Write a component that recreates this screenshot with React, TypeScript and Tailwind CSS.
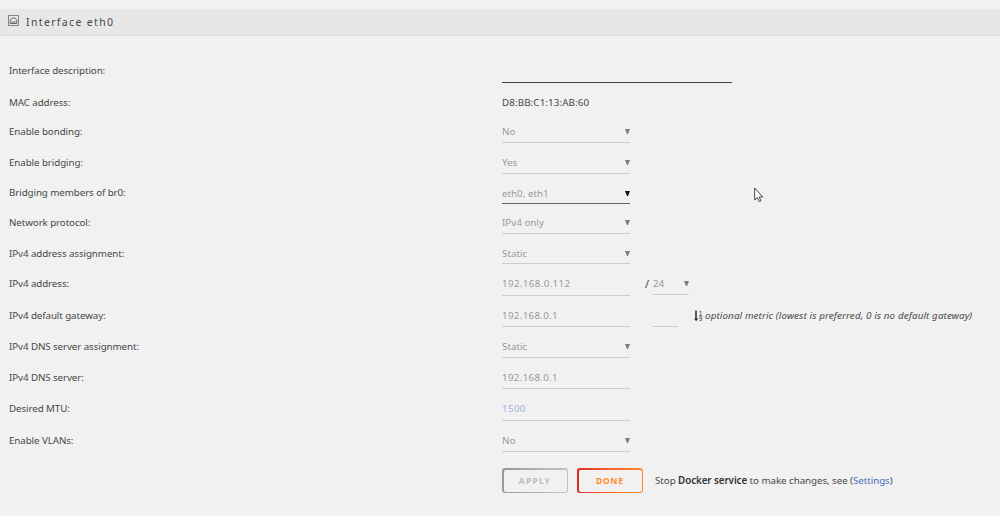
import React from 'react';

interface FieldProps {
  value?: string;
  className: string;
  arrow?: boolean;
  arrowClass?: string;
}

const Field: React.FC<FieldProps> = ({ value, className, arrow, arrowClass = 'text-[#7d7d7d]' }) => (
  <div className={`flex items-start justify-between border-b leading-[21px] ${className}`}>
    <span>{value}</span>
    {arrow && (
      <svg viewBox="0 0 6 6" className={`mt-2 h-[5px] w-[5px] fill-current ${arrowClass}`}>
        <path d="M0 0h6L3.6 6H2.4z" />
      </svg>
    )}
  </div>
);

interface RowProps {
  label: string;
  className: string;
  children: React.ReactNode;
}

const Row: React.FC<RowProps> = ({ label, className, children }) => (
  <div className={`flex items-start ${className}`}>
    <div className="w-[493px] shrink-0 leading-[21px] tracking-[-0.1px]">{label}</div>
    {children}
  </div>
);

const PortIcon = () => (
  <svg viewBox="0 0 11 11" className="mb-[3px] h-[11px] w-[11px]" fill="none" stroke="#666">
    <rect x="0.5" y="0.5" width="10" height="10" stroke="#858585" />
    <path d="M2.2 8.5V5.2L4.2 3h2.6l2 2.2v3.3z" />
    <path d="M3.5 7h4" />
  </svg>
);

const SortIcon = () => (
  <svg viewBox="0 0 9 12" className="h-3 w-[9px]" fill="#333">
    <path d="M1.2 0.5h1.6v8h1.5L2.1 11.2 0 8.5h1.2z" />
    <text x="4.8" y="5.6" fontSize="6.5" fontFamily="Liberation Sans">1</text>
    <text x="4.8" y="11.2" fontSize="6.5" fontFamily="Liberation Sans">9</text>
  </svg>
);

export default function App() {
  return (
    <div className="relative h-[516px] w-[1000px] overflow-hidden bg-[#f1f1f1] pt-[9px] font-['Noto_Sans',sans-serif] text-[9.8px] text-[#484848]">
      {/* Title bar */}
      <div className="flex h-[27px] items-center border-b border-[#dedede] bg-[#e7e7e7] pl-2">
        <PortIcon />
        <span className="ml-[7px] pt-px text-[10.5px] tracking-[1.35px]">Interface eth0</span>
      </div>

      {/* Settings */}
      <div className="pl-[9px] pt-6">
        <Row label="Interface description:" className="h-8">
          <Field className="h-[23px] w-[230px] border-[#404040]" />
        </Row>
        <Row label="MAC address:" className="h-[29px]">
          <span className="leading-[21px] tracking-[0.1px]">D8:BB:C1:13:AB:60</span>
        </Row>
        <Row label="Enable bonding:" className="h-[31px]">
          <Field value="No" arrow className="h-[22px] w-32 border-[#cdcdcd] text-[#999]" />
        </Row>
        <Row label="Enable bridging:" className="h-[30px]">
          <Field value="Yes" arrow className="h-[22px] w-32 border-[#cdcdcd] text-[#999]" />
        </Row>
        <Row label="Bridging members of br0:" className="h-[30px]">
          <Field
            value="eth0, eth1"
            arrow
            arrowClass="text-[#111]"
            className="h-[22px] w-32 border-[#666] pt-px text-[#999]"
          />
        </Row>
        <Row label="Network protocol:" className="h-[31px]">
          <Field value="IPv4 only" arrow className="h-[22px] w-32 border-[#cdcdcd] text-[#999]" />
        </Row>
        <Row label="IPv4 address assignment:" className="h-[30px]">
          <Field value="Static" arrow className="h-[21px] w-32 border-[#cdcdcd] text-[#999]" />
        </Row>
        <Row label="IPv4 address:" className="h-8">
          <Field value="192.168.0.112" className="h-[23px] w-32 border-[#cdcdcd] tracking-[0.35px] text-[#999]" />
          <span className="ml-[15px] w-2 text-[11px] leading-[21px]">/</span>
          <Field value="24" arrow className="h-[22px] w-9 border-[#cdcdcd] text-[#999]" />
        </Row>
        <Row label="IPv4 default gateway:" className="h-[31px]">
          <Field value="192.168.0.1" className="h-[22px] w-32 border-[#cdcdcd] tracking-[0.3px] text-[#999]" />
          <Field className="ml-[23px] h-[22px] w-[25px] border-[#cdcdcd]" />
          <div className="ml-4 flex h-[21px] items-center gap-0.5">
            <SortIcon />
            <span className="pt-px italic tracking-[0.12px]">optional metric (lowest is preferred, 0 is no default gateway)</span>
          </div>
        </Row>
        <Row label="IPv4 DNS server assignment:" className="h-[31px]">
          <Field value="Static" arrow className="h-[22px] w-32 border-[#cdcdcd] text-[#999]" />
        </Row>
        <Row label="IPv4 DNS server:" className="h-[31px]">
          <Field value="192.168.0.1" className="h-[22px] w-32 border-[#cdcdcd] tracking-[0.3px] text-[#999]" />
        </Row>
        <Row label="Desired MTU:" className="h-8">
          <Field value="1500" className="h-[23px] w-32 border-[#cdcdcd] tracking-[0.35px] text-[#a3b0dc]" />
        </Row>
        <Row label="Enable VLANs:" className="h-[38px]">
          <Field value="No" arrow className="h-[22px] w-32 border-[#cdcdcd] text-[#999]" />
        </Row>

        {/* Actions */}
        <div className="ml-[493px] flex items-center">
          <button className="h-[25px] w-[66px] rounded-[3px] bg-linear-to-r from-[#999] to-[#c4c4c4] p-[1.5px]">
            <span className="flex h-full items-center justify-center rounded-[2px] bg-[#f1f1f1] pt-px text-[8.5px] font-bold tracking-[1.2px] text-[#bcbcbc]">
              APPLY
            </span>
          </button>
          <button className="ml-[9px] h-[25px] w-[66px] rounded-[3px] bg-linear-to-r from-[#e22828] to-[#ff8c2f] p-[1.5px]">
            <span className="flex h-full items-center justify-center rounded-[2px] bg-[#f1f1f1] pt-px text-[8.5px] font-bold tracking-[0.8px] text-[#ff8c2f]">
              DONE
            </span>
          </button>
          <span className="ml-3 pt-0.5 tracking-[-0.07px]">
            Stop <b className="font-semibold text-[#333]">Docker service</b> to make changes, see (<a className="text-[#486dba]">Settings</a>)
          </span>
        </div>
      </div>

      {/* Mouse pointer */}
      <svg viewBox="0 0 10 16" className="absolute left-[754px] top-[187px] h-4 w-2.5" fill="#fff" stroke="#444450" strokeWidth="1">
        <path d="M.7 1v12l2.7-2.4 1.7 4 1.8-.8-1.7-3.8h3.5z" />
      </svg>
    </div>
  );
}
